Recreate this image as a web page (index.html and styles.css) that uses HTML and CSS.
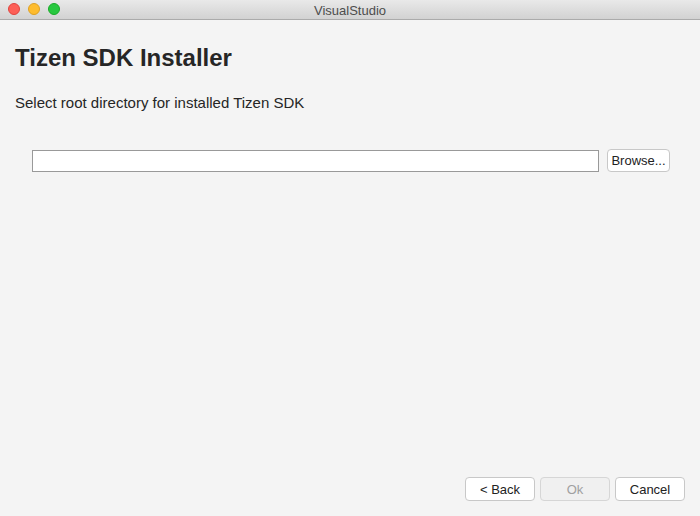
FILE: index.html
```html
<!DOCTYPE html>
<html>
<head>
<meta charset="utf-8">
<link rel="stylesheet" href="styles.css">
</head>
<body>
<div class="window">
  <div class="titlebar">
    <div class="lights">
      <span class="light red"></span>
      <span class="light yellow"></span>
      <span class="light green"></span>
    </div>
    <div class="title">VisualStudio</div>
  </div>
  <div class="content">
    <h1 class="heading">Tizen SDK Installer</h1>
    <p class="subtitle">Select root directory for installed Tizen SDK</p>
    <div class="pathrow">
      <input class="pathinput" type="text">
      <button class="btn browse">Browse...</button>
    </div>
    <div class="spacer"></div>
    <div class="footer">
      <button class="btn nav">&lt; Back</button>
      <button class="btn nav disabled">Ok</button>
      <button class="btn nav">Cancel</button>
    </div>
  </div>
</div>
</body>
</html>
```
FILE: styles.css
```css
html, body {
  margin: 0;
  padding: 0;
  height: 100%;
}
body {
  font-family: "Liberation Sans", Arial, sans-serif;
  background: #f4f4f4;
  color: #262626;
}
.window {
  display: flex;
  flex-direction: column;
  height: 516px;
  width: 700px;
  background: #f4f4f4;
}
.titlebar {
  position: relative;
  height: 19px;
  border-bottom: 1px solid #ababab;
  background: linear-gradient(#e9e9e9, #d2d2d2);
  display: flex;
  align-items: center;
  justify-content: center;
}
.lights {
  position: absolute;
  left: 8px;
  top: 3px;
  display: flex;
  gap: 8px;
}
.light {
  width: 12px;
  height: 12px;
  border-radius: 50%;
  box-sizing: border-box;
}
.red { background: #fd5f57; border: 0.5px solid #e0443e; }
.yellow { background: #febc2e; border: 0.5px solid #dea123; }
.green { background: #28c840; border: 0.5px solid #1aab29; }
.title {
  font-size: 13px;
  color: #4d4d4d;
  padding-top: 1px;
}
.content {
  flex: 1;
  display: flex;
  flex-direction: column;
  padding: 0 15px 15px 15px;
}
.heading {
  margin: 24px 0 0 0;
  font-size: 24px;
  font-weight: bold;
  line-height: 28px;
  color: #262626;
}
.subtitle {
  margin: 22px 0 0 0;
  font-size: 15px;
  line-height: 18px;
  color: #262626;
}
.pathrow {
  margin-top: 37px;
  display: flex;
  align-items: center;
  padding-left: 17px;
  gap: 8px;
}
.pathinput {
  width: 567px;
  height: 22px;
  box-sizing: border-box;
  border: 1px solid #999;
  background: #fff;
  margin: 0;
  padding: 0 3px;
}
.btn {
  font-family: "Liberation Sans", Arial, sans-serif;
  font-size: 13px;
  color: #222;
  background: #fff;
  border: 1px solid #c8c8c8;
  border-radius: 4px;
  box-sizing: border-box;
  margin: 0;
  padding: 0;
  height: 23px;
}
.browse {
  width: 63px;
}
.spacer {
  flex: 1;
}
.footer {
  display: flex;
  justify-content: flex-end;
  gap: 5px;
}
.nav {
  width: 70px;
  height: 24px;
}
.disabled {
  background: #f0f0f0;
  color: #a0a0a0;
  border-color: #d6d6d6;
}
```
